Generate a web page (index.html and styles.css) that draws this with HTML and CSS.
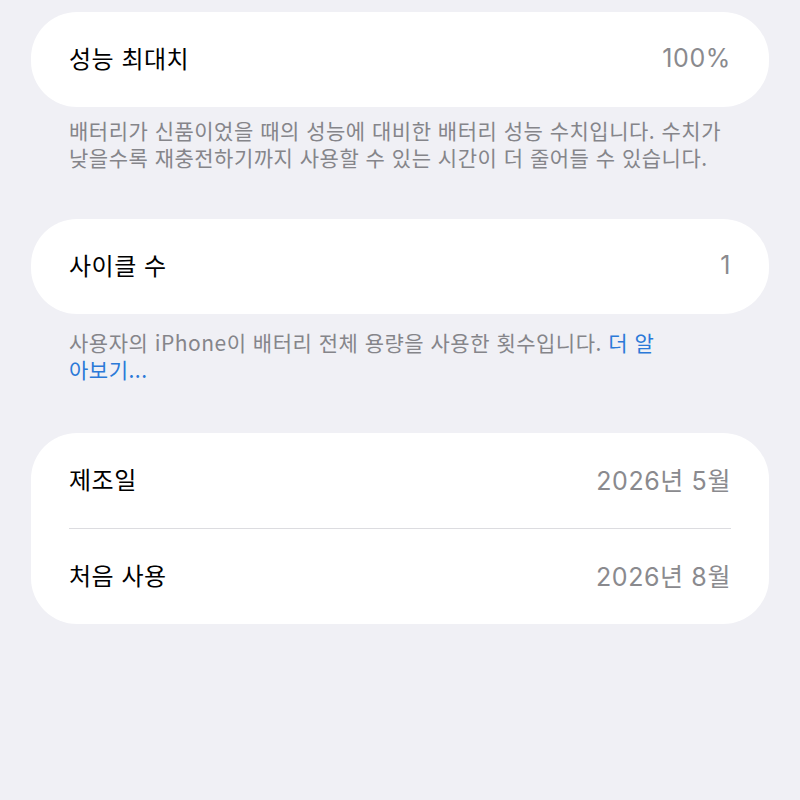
FILE: index.html
```html
<!DOCTYPE html>
<html lang="ko">
<head>
<meta charset="utf-8">
<link rel="stylesheet" href="styles.css">
</head>
<body>
<div class="page">
  <div class="card card-first">
    <div class="row"><span class="label">성능 최대치</span><span class="value">100%</span></div>
  </div>
  <p class="note note-1">배터리가 신품이었을 때의 성능에 대비한 배터리 성능 수치입니다. 수치가<br>낮을수록 재충전하기까지 사용할 수 있는 시간이 더 줄어들 수 있습니다.</p>

  <div class="card">
    <div class="row"><span class="label">사이클 수</span><span class="value">1</span></div>
  </div>
  <p class="note note-2">사용자의 iPhone이 배터리 전체 용량을 사용한 횟수입니다. <span class="link">더 알<br>아보기...</span></p>

  <div class="card">
    <div class="row"><span class="label">제조일</span><span class="value">2026년 5월</span></div>
    <div class="divider"></div>
    <div class="row"><span class="label">처음 사용</span><span class="value">2026년 8월</span></div>
  </div>
</div>
</body>
</html>
```

FILE: styles.css
```css
html, body {
  margin: 0;
  padding: 0;
  background: #f0f0f5;
}
body {
  font-family: "Noto Sans CJK KR", "Noto Sans", sans-serif;
  -webkit-font-smoothing: antialiased;
}
.page {
  padding: 12px 31px 0;
  display: flex;
  flex-direction: column;
}
.card {
  background: #ffffff;
  border-radius: 46px;
  padding: 0 38px;
}
.row {
  height: 95px;
  box-sizing: border-box;
  padding-bottom: 4px;
  display: flex;
  align-items: center;
  justify-content: space-between;
}
.label {
  font-size: 24px;
  letter-spacing: 0.5px;
  color: #000000;
}
.value {
  font-family: "Inter", "Noto Sans CJK KR", sans-serif;
  font-size: 25px;
  letter-spacing: 0.6px;
  color: #8a8a8e;
}
.divider {
  height: 1px;
  background: #dcdce0;
}
.note {
  margin: 0;
  padding: 0 38px;
  font-size: 21px;
  letter-spacing: 0.5px;
  line-height: 27px;
  color: #85858a;
}
.note-1 {
  padding-top: 10px;
  margin-bottom: 48px;
}
.note-2 {
  padding-top: 15px;
  margin-bottom: 50px;
}
.link {
  color: #2b79d8;
}
```
